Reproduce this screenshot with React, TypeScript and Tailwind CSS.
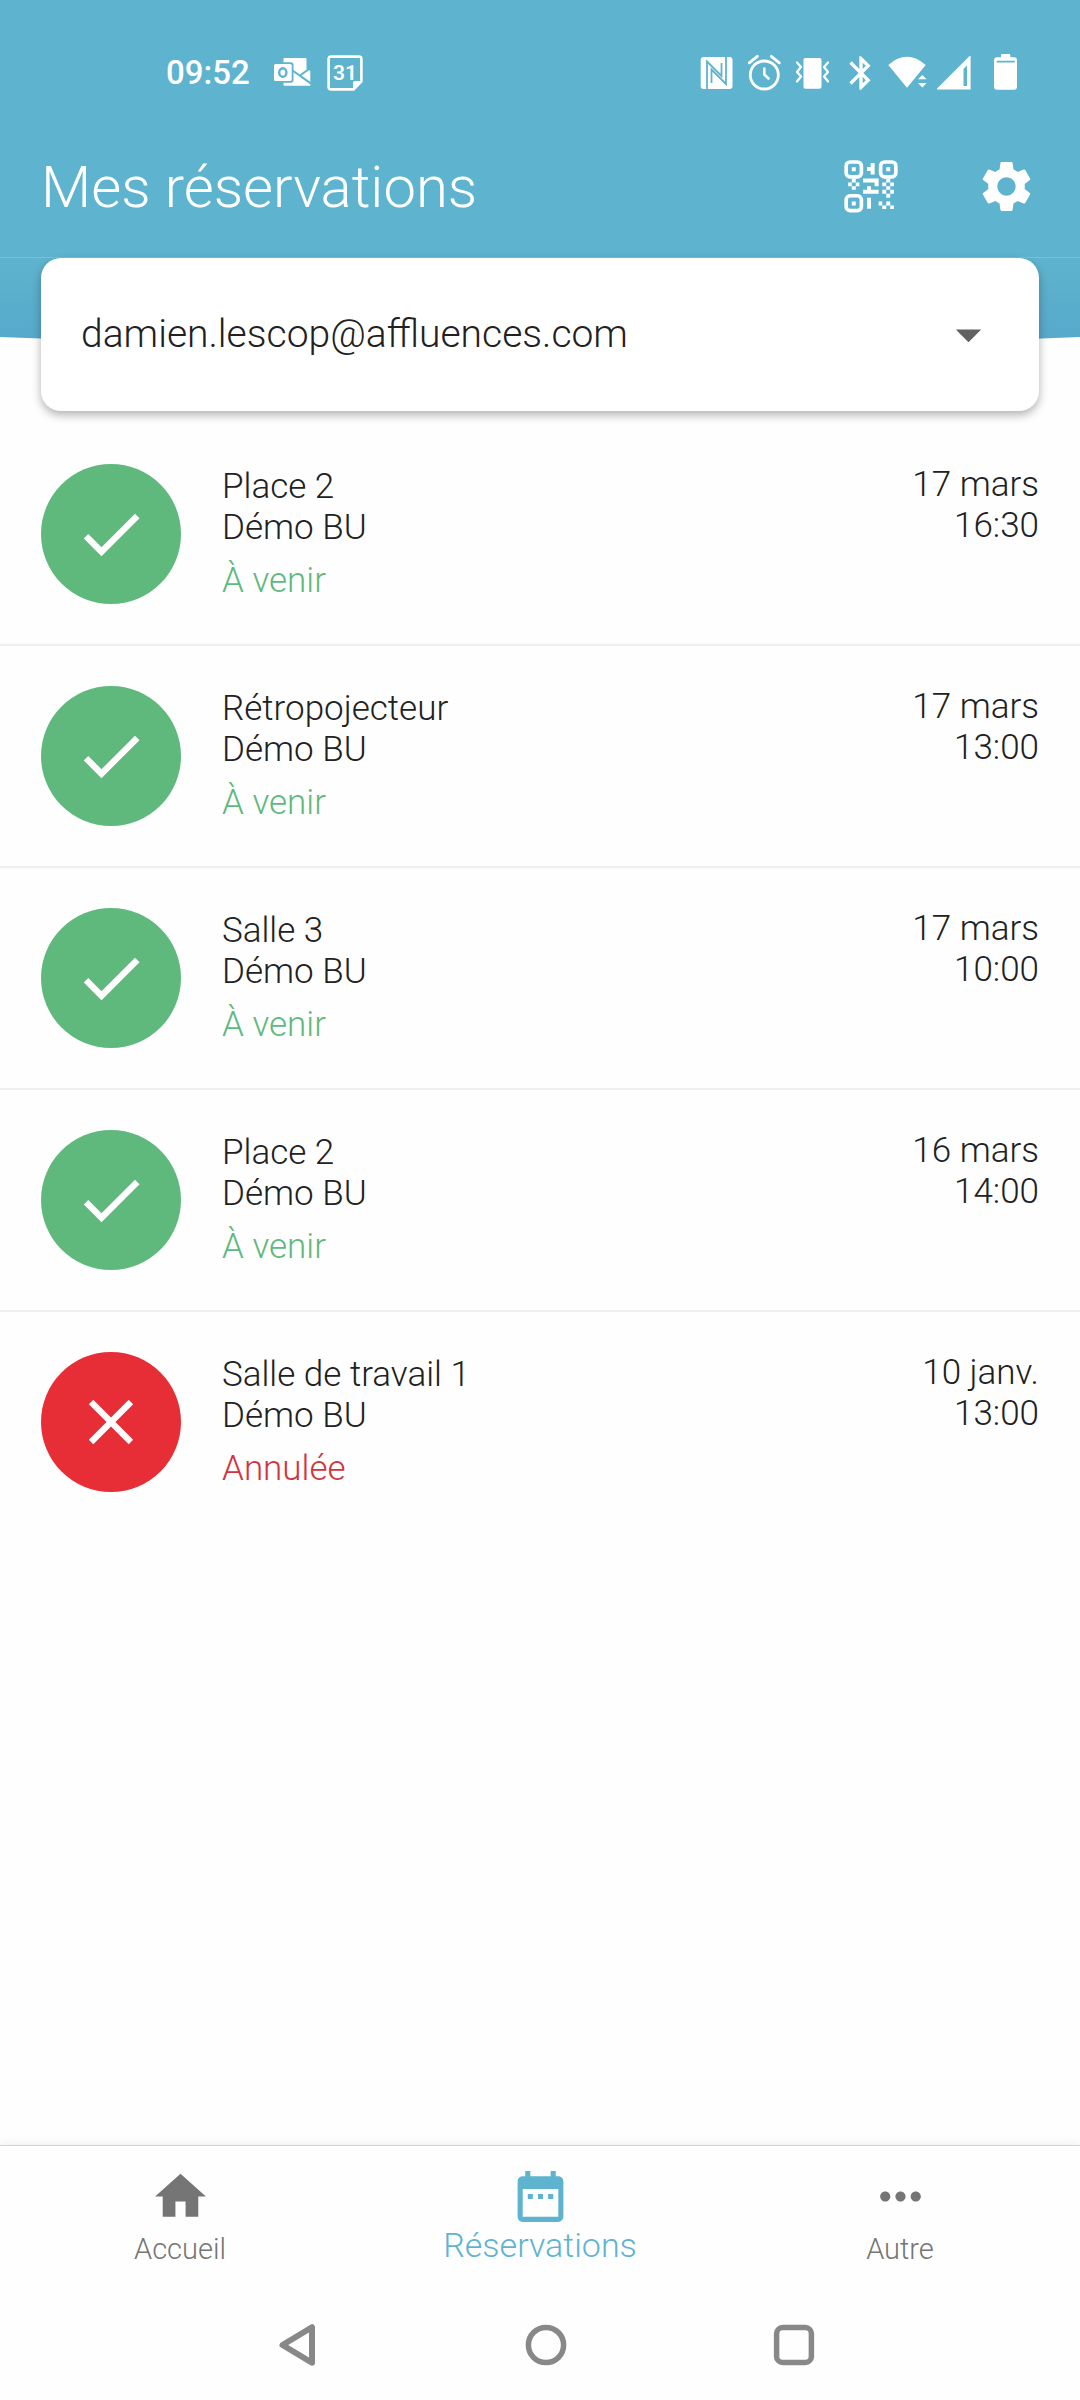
import { ReactNode, useState } from "react";
import {
  MdArrowDropDown,
  MdBluetooth,
  MdCheck,
  MdClose,
  MdDateRange,
  MdHome,
  MdMoreHoriz,
  MdSettings,
} from "react-icons/md";

interface Reservation {
  id: number;
  title: string;
  place: string;
  date: string;
  time: string;
  cancelled?: boolean;
}

const reservations: Reservation[] = [
  { id: 1, title: "Place 2", place: "Démo BU", date: "17 mars", time: "16:30" },
  { id: 2, title: "Rétropojecteur", place: "Démo BU", date: "17 mars", time: "13:00" },
  { id: 3, title: "Salle 3", place: "Démo BU", date: "17 mars", time: "10:00" },
  { id: 4, title: "Place 2", place: "Démo BU", date: "16 mars", time: "14:00" },
  {
    id: 5,
    title: "Salle de travail 1",
    place: "Démo BU",
    date: "10 janv.",
    time: "13:00",
    cancelled: true,
  },
];

function StatusIcon({ children }: { children: ReactNode }) {
  return (
    <svg
      viewBox="0 0 40 36"
      className="h-9 w-10 overflow-visible"
      fill="none"
      strokeLinecap="round"
      strokeLinejoin="round"
    >
      {children}
    </svg>
  );
}

function StatusBar() {
  return (
    <div className="flex items-center justify-between pt-[55px] pr-[55px] pb-[25px] pl-[166px]">
      <div className="flex h-9 items-center">
        <span className="mr-6 text-[33px] font-medium">09:52</span>

        {/* Outlook */}
        <svg viewBox="0 0 37 36" className="mr-4 h-9 w-[37px]">
          <path d="M10.5 3H31.7Q32.7 3 32.7 4V13.5L36.3 16V30.7H10.5Q9.5 30.7 9.5 29.7V4Q9.5 3 10.5 3Z" fill="#fff" />
          <path d="M32.7 3H37V12L32.7 14.6Z" fill="#5eb4ce" />
          <path d="M18.5 15.5L37 28.6M26 20.5L37 12.6" stroke="#5eb4ce" strokeWidth="2" />
          <rect x="-1.5" y="7.3" width="21" height="20.4" rx="2.6" fill="#5eb4ce" />
          <rect x="0" y="9" width="17.7" height="17" rx="1.6" fill="#fff" />
          <ellipse cx="8.8" cy="17.5" rx="3.6" ry="4.3" fill="none" stroke="#5eb4ce" strokeWidth="2.4" />
        </svg>

        {/* Calendar */}
        <svg viewBox="0 0 36 36" className="h-9 w-9">
          <path
            d="M4 1.6H32Q34.4 1.6 34.4 4V26.5L26.5 34.4H4Q1.6 34.4 1.6 32V4Q1.6 1.6 4 1.6Z"
            fill="none"
            stroke="#fff"
            strokeWidth="2.6"
          />
          <path d="M34.4 26L26 34.4V28Q26 26 28 26Z" fill="#fff" />
          <text x="18" y="25" textAnchor="middle" fontSize="21" fontWeight="600" fill="#fff">
            31
          </text>
        </svg>
      </div>

      <div className="flex h-9 items-center gap-2">
        {/* NFC */}
        <StatusIcon>
          <rect x="3.7" y="2" width="31.8" height="32" rx="3" fill="#fff" />
          <path
            d="M10 34V6.5L24.5 21V8M29 2V29L14.5 14.5V28"
            stroke="#5eb4ce"
            strokeWidth="1.8"
            strokeLinecap="butt"
            strokeLinejoin="miter"
          />
        </StatusIcon>
        {/* Alarm */}
        <StatusIcon>
          <circle cx="19.3" cy="20" r="14" stroke="#fff" strokeWidth="2.8" />
          <path d="M4.3 7.8L12.3 1.3M26.3 1.3L34.3 7.8" stroke="#fff" strokeWidth="2.8" />
          <path d="M19.3 13.5V19.5L23.5 23.5" stroke="#fff" strokeWidth="2.6" />
        </StatusIcon>
        {/* Vibrate */}
        <StatusIcon>
          <rect x="10.5" y="3" width="18" height="30.7" rx="2" fill="#fff" />
          <path
            d="M4 7.5L8 12L4 17L8 21.5L4 26.5M35 7.5L31 12L35 17L31 21.5L35 26.5"
            stroke="#fff"
            strokeWidth="2.2"
          />
        </StatusIcon>
        <MdBluetooth className="h-10 w-10" />
        {/* Wifi */}
        <StatusIcon>
          <path d="M18 32.7L-0.7 10Q18 -6.4 36.7 10Z" fill="#fff" />
          <path d="M29 24.2L33.3 20L37.6 24.2ZM29 28L33.3 32.4L37.6 28Z" fill="#fff" />
        </StatusIcon>
        {/* Signal */}
        <StatusIcon>
          <path d="M0.5 34L33 1.5V34Z" fill="#fff" stroke="#fff" strokeWidth="1.2" />
          <path d="M26.5 14L30 10.5V31H26.5Z" fill="#5eb4ce" />
        </StatusIcon>
        {/* Battery */}
        <StatusIcon>
          <rect x="16" y="-1" width="9.3" height="6" rx="1" fill="#fff" />
          <rect x="9" y="2.3" width="23" height="32.4" rx="3" fill="#fff" />
          <path d="M12.5 6.7H29" stroke="#5eb4ce" strokeWidth="1.8" />
        </StatusIcon>
      </div>
    </div>
  );
}

function QrIcon() {
  return (
    <svg viewBox="0 0 162 160" className="h-[53px] w-[54px]" fill="currentColor">
      <g fill="none" stroke="currentColor" strokeWidth="11">
        <rect x="6" y="6" width="46" height="45" rx="12" />
        <rect x="110" y="6" width="46" height="45" rx="12" />
        <rect x="6" y="108" width="46" height="45" rx="12" />
      </g>
      <path d="M23 22h12v12h-12zM127 22h12v12h-12zM23 125h12v12h-12z" />
      <path d="M80 9h12v35h-12v-11h-11v-12h11z" />
      <path d="M23 56h12v12h-12zM12 68h11v11h-11zM35 68h11v11h-11zM23 79h12v11h-12z" />
      <path d="M57 56h47v23h-12v-11h-35zM69 79h12v11h23v12h-47v-12h12z" />
      <path d="M127 56h12v12h-12zM115 68h12v11h-12zM139 68h11v11h-11zM127 79h12v11h-12zM115 90h12v12h-12zM139 90h11v12h-11zM127 102h12v12h-12z" />
      <path d="M69 114h12v33h-12z" />
      <path d="M104 125h11v12h-11zM115 137h12v11h-12zM127 125h12v12h-12zM139 137h11v11h-11z" />
    </svg>
  );
}

function ReservationRow({ item }: { item: Reservation }) {
  return (
    <li className="flex gap-[41px] border-b-2 border-[#efefef] px-[41px] py-10 last:border-b-0">
      <div
        className={`flex size-[140px] shrink-0 items-center justify-center rounded-full text-white ${
          item.cancelled ? "bg-[#e72d35]" : "bg-[#5fb97d]"
        }`}
      >
        {item.cancelled ? <MdClose className="size-[76px]" /> : <MdCheck className="size-[76px]" />}
      </div>
      <div className="flex-1 pt-0.5">
        <p>{item.title}</p>
        <p>{item.place}</p>
        <p className={`mt-3 ${item.cancelled ? "text-[#d0343c]" : "text-[#5fb97d]"}`}>
          {item.cancelled ? "Annulée" : "À venir"}
        </p>
      </div>
      <div className="text-right">
        <p>{item.date}</p>
        <p>{item.time}</p>
      </div>
    </li>
  );
}

export default function App() {
  const [email, setEmail] = useState("damien.lescop@affluences.com");

  return (
    <div className="flex min-h-screen flex-col bg-[#fefefe] font-[Roboto,sans-serif] text-[#212121]">
      <header className="bg-[#5eb4ce] text-white">
        <StatusBar />
        <div className="flex h-[142px] items-center justify-between border-b border-[#7ac1d6] pr-[43px] pl-[41px]">
          <h1 className="text-[58px] leading-[70px] font-light">Mes réservations</h1>
          <div className="flex items-center gap-[78px]">
            <button type="button" aria-label="Scanner un QR code">
              <QrIcon />
            </button>
            <button type="button" aria-label="Paramètres">
              <MdSettings className="size-[61px]" />
            </button>
          </div>
        </div>
      </header>

      <main className="flex-1">
        <div className="relative px-[41px]">
          <svg
            viewBox="0 0 1080 92"
            preserveAspectRatio="none"
            className="absolute inset-x-0 top-0 h-[92px] w-full"
          >
            <defs>
              <linearGradient id="wave" x1="0" y1="0" x2="0" y2="1">
                <stop offset="0" stopColor="#5eb4ce" />
                <stop offset="1" stopColor="#56a8ca" />
              </linearGradient>
            </defs>
            <path d="M0 0H1080V79Q540 102 0 79Z" fill="url(#wave)" />
          </svg>
          <div className="relative mb-[13px] rounded-[20px] bg-white shadow-[0_4px_10px_rgba(0,0,0,0.3)]">
            <select
              aria-label="Adresse e-mail"
              value={email}
              onChange={(e) => setEmail(e.target.value)}
              className="h-[153px] w-full appearance-none rounded-[20px] bg-transparent px-10 text-[39px] font-light"
            >
              <option>damien.lescop@affluences.com</option>
            </select>
            <MdArrowDropDown className="pointer-events-none absolute inset-y-0 right-10 my-auto size-[61px] text-[#616161]" />
          </div>
        </div>

        <ul className="text-[35px] leading-[41px] font-light">
          {reservations.map((item) => (
            <ReservationRow key={item.id} item={item} />
          ))}
        </ul>
      </main>

      <footer className="border-t border-[#d2d4d4] shadow-[0_-2px_10px_rgba(0,0,0,0.06)]">
        <nav className="grid grid-cols-3 pt-5 pb-[18px] font-light text-[#757575]">
          <a href="#accueil" className="flex flex-col items-center text-[29px] leading-11">
            <MdHome className="size-[61px]" />
            Accueil
          </a>
          <a
            href="#reservations"
            aria-current="page"
            className="flex flex-col items-center text-[34px] leading-9 text-[#5eb4ce]"
          >
            <MdDateRange className="size-[61px]" />
            Réservations
          </a>
          <a href="#autre" className="flex flex-col items-center text-[29px] leading-11">
            <MdMoreHoriz className="size-[61px]" />
            Autre
          </a>
        </nav>

        <div className="flex h-[111px] items-center justify-center gap-[204px] pl-3">
          <button type="button" aria-label="Retour">
            <svg viewBox="0 0 44 44" className="size-11" fill="none" stroke="#888" strokeWidth="6" strokeLinejoin="round">
              <path d="M6.5 22L36 4.2V39.8Z" />
            </svg>
          </button>
          <button type="button" aria-label="Écran d'accueil">
            <svg viewBox="0 0 44 44" className="size-11" fill="none" stroke="#888" strokeWidth="5.5">
              <circle cx="22" cy="22" r="17.6" />
            </svg>
          </button>
          <button type="button" aria-label="Applications récentes">
            <svg viewBox="0 0 44 44" className="size-11" fill="none" stroke="#888" strokeWidth="5.5">
              <rect x="4.6" y="4.6" width="34.8" height="34.8" rx="6" />
            </svg>
          </button>
        </div>
      </footer>
    </div>
  );
}
